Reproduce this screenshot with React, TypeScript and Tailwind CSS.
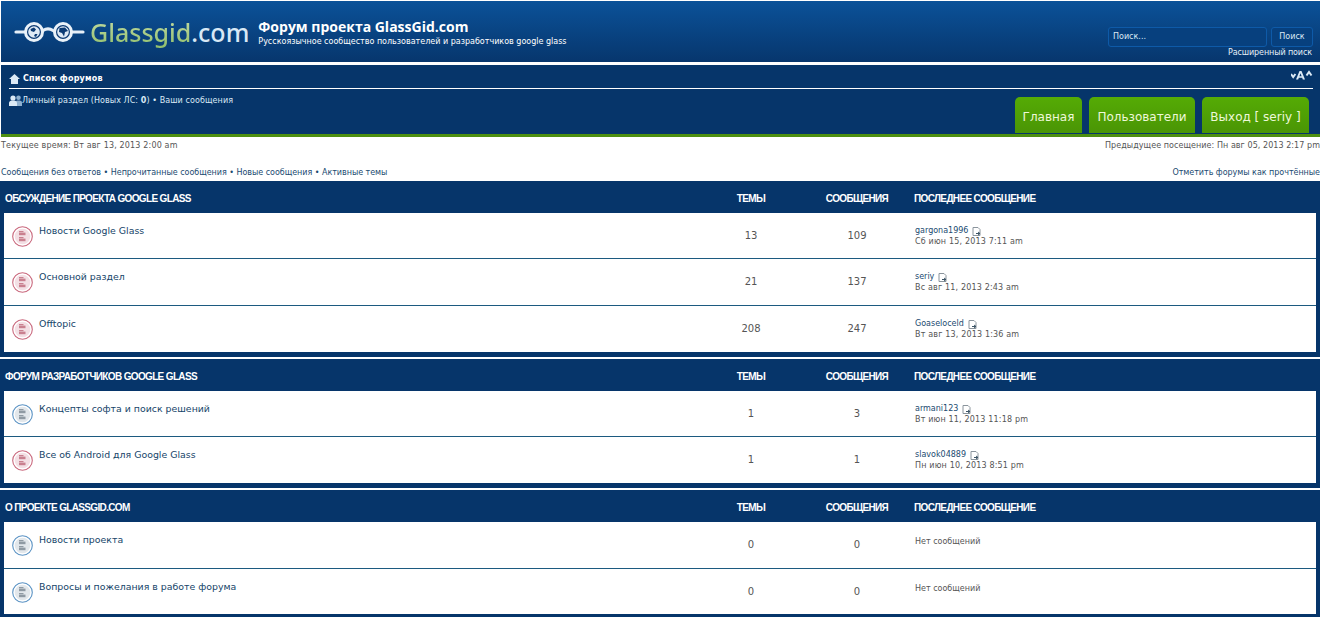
const DEJAVU = "font-['DejaVu_Sans',sans-serif]";

type Forum = {
  title: string;
  topics: number;
  posts: number;
  author?: string;
  date?: string;
  unread: boolean;
  height: string;
};

type Section = {
  title: string;
  rows: Forum[];
};

const sections: Section[] = [
  {
    title: "ОБСУЖДЕНИЕ ПРОЕКТА GOOGLE GLASS",
    rows: [
      { title: "Новости Google Glass", topics: 13, posts: 109, author: "gargona1996", date: "Сб июн 15, 2013 7:11 am", unread: true, height: "h-[46px]" },
      { title: "Основной раздел", topics: 21, posts: 137, author: "seriy", date: "Вс авг 11, 2013 2:43 am", unread: true, height: "h-[47px]" },
      { title: "Offtopic", topics: 208, posts: 247, author: "Goaseloceld", date: "Вт авг 13, 2013 1:36 am", unread: true, height: "h-[46px]" },
    ],
  },
  {
    title: "ФОРУМ РАЗРАБОТЧИКОВ GOOGLE GLASS",
    rows: [
      { title: "Концепты софта и поиск решений", topics: 1, posts: 3, author: "armani123", date: "Вт июн 11, 2013 11:18 pm", unread: false, height: "h-[46px]" },
      { title: "Все об Android для Google Glass", topics: 1, posts: 1, author: "slavok04889", date: "Пн июн 10, 2013 8:51 pm", unread: true, height: "h-[46px]" },
    ],
  },
  {
    title: "О ПРОЕКТЕ GLASSGID.COM",
    rows: [
      { title: "Новости проекта", topics: 0, posts: 0, unread: false, height: "h-[47px]" },
      { title: "Вопросы и пожелания в работе форума", topics: 0, posts: 0, unread: false, height: "h-[45px]" },
    ],
  },
];

function GlassesLogo() {
  return (
    <svg width="76" height="28" viewBox="0 0 76 28" className="shrink-0">
      <path d="M2 14h10M29 12.5c3-2 7-2 10 0M58 14h11" stroke="#e6eff8" strokeWidth="3.2" strokeLinecap="round" fill="none" />
      <circle cx="20" cy="14" r="8.5" fill="#0b3a73" stroke="#eaf2f9" strokeWidth="3" />
      <circle cx="49" cy="14" r="8.5" fill="#0b3a73" stroke="#eaf2f9" strokeWidth="3" />
      <circle cx="20" cy="14" r="5.8" fill="#dfeaf5" />
      <circle cx="49" cy="14" r="5.8" fill="#dfeaf5" />
      <path d="M16.5 11l3.5-1.5 2 2-2 2.5-3-1zM21 16l2.5 0-1.5 3-2-1z" fill="#0b3a73" />
      <path d="M45.5 10l5.5-.5 3 3.5-3 1-1 4.5-2-3.5-3-1z" fill="#0b3a73" />
    </svg>
  );
}

function HomeIcon() {
  return (
    <svg width="11" height="10" viewBox="0 0 11 10" className="shrink-0">
      <path d="M5.5 0L11 5H9v5H2V5H0z" fill="#dbe9f5" />
    </svg>
  );
}

function MembersIcon() {
  return (
    <svg width="13" height="11" viewBox="0 0 13 11" className="shrink-0">
      <circle cx="9.5" cy="2.8" r="2.3" fill="#8fb0cf" />
      <path d="M6 11V7.5C6 6 7.5 5.5 9.5 5.5S13 6 13 7.5V11z" fill="#8fb0cf" />
      <circle cx="4" cy="3" r="2.6" fill="#dbe9f5" />
      <path d="M0 11V7.8C0 6.2 2 5.6 4 5.6S8 6.2 8 7.8V11z" fill="#dbe9f5" />
    </svg>
  );
}

function FontSizeIcon() {
  return (
    <svg width="22" height="10" viewBox="0 0 22 10" className="shrink-0">
      <path d="M0 4l2.2 3L4.4 4" stroke="#dbe9f5" strokeWidth="2" fill="none" />
      <path d="M5 9.5L8.5 1h2L14 9.5h-2.2l-.6-1.7H7.8l-.6 1.7zM8.4 6.2h2.2L9.5 3.2z" fill="#dbe9f5" />
      <path d="M15.5 5.5L18 2l2.5 3.5" stroke="#dbe9f5" strokeWidth="2" fill="none" />
    </svg>
  );
}

function PostIcon() {
  return (
    <svg width="9" height="9" viewBox="0 0 9 9" className="shrink-0">
      <path d="M1 .5h5l2 2v6H1z" fill="#fff" stroke="#8a949c" />
      <path d="M4 6.5h4M6 5l2 1.5L6 8" stroke="#3d5566" strokeWidth="1" fill="none" />
    </svg>
  );
}

function ForumIcon({ unread }: { unread: boolean }) {
  const ring = unread ? "#c9687d" : "#5b93c4";
  const bar = unread ? "#c9808f" : "#8f9aa3";
  return (
    <svg width="21" height="21" viewBox="0 0 21 21" className="shrink-0">
      <circle cx="10.5" cy="10.5" r="9.8" fill="#fff" stroke={ring} strokeWidth="1.1" />
      <circle cx="10.5" cy="10.5" r="7.8" fill={unread ? "#f3dfe4" : "#e2e7eb"} />
      <rect x="7" y="5" width="4.5" height="1.2" fill={bar} />
      <rect x="7" y="6.6" width="6.5" height="2.6" fill={bar} />
      <rect x="7" y="11" width="4.5" height="1.2" fill={bar} />
      <rect x="7" y="12.6" width="6.5" height="2.6" fill={bar} />
    </svg>
  );
}

function Tab({ label, width }: { label: string; width: string }) {
  return (
    <div className={`${width} flex h-[36px] items-center justify-center rounded-t-[5px] bg-gradient-to-b from-[#55ab05] to-[#4a9505] pt-[3px] font-['DejaVu_Sans',sans-serif] text-[12px] text-[#eef8d8]`}>
      {label}
    </div>
  );
}

function ForumRow({ row, last }: { row: Forum; last: boolean }) {
  return (
    <div className={`${row.height} flex bg-white ${last ? "" : "border-b border-[#1c5a80]"}`}>
      <div className="flex min-w-0 flex-1 items-start pl-[8px]">
        <div className="pt-[13px]">
          <ForumIcon unread={row.unread} />
        </div>
        <div className="pl-[6px] pt-[11px] text-[9.4px] leading-[13px] text-[#154469]">{row.title}</div>
      </div>
      <div className="w-[106px] pt-[16px] text-center text-[10px] leading-[13px] text-[#555]">{row.topics}</div>
      <div className="w-[106px] pt-[16px] text-center text-[10px] leading-[13px] text-[#555]">{row.posts}</div>
      <div className="w-[406px] pl-[5px] pt-[13px] text-[8px] leading-[10px] text-[#555]">
        {row.author ? (
          <>
            <div className="flex items-center gap-[4px] text-[#1a4a70]">
              {row.author}
              <PostIcon />
            </div>
            <div className="pt-px tracking-[0.17px]">{row.date}</div>
          </>
        ) : (
          <div className="pt-[2px]">Нет сообщений</div>
        )}
      </div>
    </div>
  );
}

function ForumSection({ section }: { section: Section }) {
  return (
    <div className="bg-[#06356a] px-[4px] pb-[5px]">
      <div className="flex h-[32px] items-center pt-[2px] font-['Liberation_Sans',sans-serif] text-[10px] font-bold tracking-[-0.65px] text-white">
        <div className="min-w-0 flex-1 pl-px">{section.title}</div>
        <div className="w-[106px] text-center">ТЕМЫ</div>
        <div className="w-[106px] text-center">СООБЩЕНИЯ</div>
        <div className="w-[406px] pl-[4px]">ПОСЛЕДНЕЕ СООБЩЕНИЕ</div>
      </div>
      {section.rows.map((row, i) => (
        <ForumRow key={row.title} row={row} last={i === section.rows.length - 1} />
      ))}
    </div>
  );
}

export default function App() {
  return (
    <div className={`${DEJAVU} h-[617px] w-[1320px] overflow-hidden bg-white pt-px`}>
      {/* Шапка */}
      <div className="ml-px flex h-[61px] items-start bg-gradient-to-b from-[#0b5299] to-[#07366d]">
        <div className="flex items-center pl-[13px] pt-[17px]">
          <GlassesLogo />
          <div className="font-['Noto_Sans',sans-serif] text-[25px] font-medium leading-[28px]">
            <span className="bg-gradient-to-b from-[#c8dfa8] to-[#8ebd6a] bg-clip-text text-transparent">Glassgid</span>
            <span className="text-[#d8e8f5]">.com</span>
          </div>
        </div>
        <div className="pl-[9px] pt-[17px] text-white">
          <div className="text-[14px] font-bold leading-[18px] [font-family:'Open_Sans',sans-serif]">Форум проекта GlassGid.com</div>
          <div className="pt-px text-[8px] leading-[10px]">Русскоязычное сообщество пользователей и разработчиков google glass</div>
        </div>
        <div className="ml-auto flex flex-col items-end pr-[7px] pt-[26px]">
          <div className="flex gap-[4px]">
            <div className="flex h-[20px] w-[159px] items-center rounded-[3px] border border-[#0e5aa8] bg-[#07407e] pl-[4px] text-[8px] text-[#dbe9f5]">Поиск...</div>
            <div className="flex h-[20px] w-[42px] items-center justify-center rounded-[3px] border border-[#0e5aa8] bg-[#07407e] text-[8px] text-[#dbe9f5]">Поиск</div>
          </div>
          <div className="pr-px pt-px text-[8px] leading-[10px] tracking-[-0.1px] text-[#e6f0f8]">Расширенный поиск</div>
        </div>
      </div>

      {/* Навигация */}
      <div className="mt-[3px] ml-px h-[72px] border-b-[3px] border-[#4d8f10] bg-[#06356a] pl-[8px] pr-[7px]">
        <div className="flex h-[24px] items-center gap-[3px] border-b border-white pt-[5px] text-[8px] font-bold tracking-[0.2px] text-white">
          <HomeIcon />
          <span>Список форумов</span>
          <div className="ml-auto -translate-y-[4px]">
            <FontSizeIcon />
          </div>
        </div>
        <div className="flex items-start justify-between">
          <div className="flex items-center pt-[6px] text-[8px] leading-[11px] tracking-[0.08px] text-[#dbeaf5]">
            <MembersIcon />
            <span>Личный раздел (Новых ЛС: <b>0</b>) • Ваши сообщения</span>
          </div>
          <div className="flex gap-[7px] pr-[4px] pt-[8px]">
            <Tab label="Главная" width="w-[67px]" />
            <Tab label="Пользователи" width="w-[106px]" />
            <Tab label="Выход [ seriy ]" width="w-[107px]" />
          </div>
        </div>
      </div>

      {/* Время и ссылки */}
      <div className="flex justify-between pl-px pt-[4px] text-[8px] leading-[10px] text-[#555]">
        <span className="tracking-[0.16px]">Текущее время: Вт авг 13, 2013 2:00 am</span>
        <span className="tracking-[0.06px]">Предыдущее посещение: Пн авг 05, 2013 2:17 pm</span>
      </div>
      <div className="flex justify-between pl-px pt-[17px] text-[8px] leading-[10px] tracking-[-0.03px] text-[#1a4a70]">
        <span>Сообщения без ответов • Непрочитанные сообщения • Новые сообщения • Активные темы</span>
        <span>Отметить форумы как прочтённые</span>
      </div>

      {/* Разделы */}
      <div className="mt-[3px] flex flex-col gap-[2px]">
        {sections.map((section) => (
          <ForumSection key={section.title} section={section} />
        ))}
      </div>
    </div>
  );
}
